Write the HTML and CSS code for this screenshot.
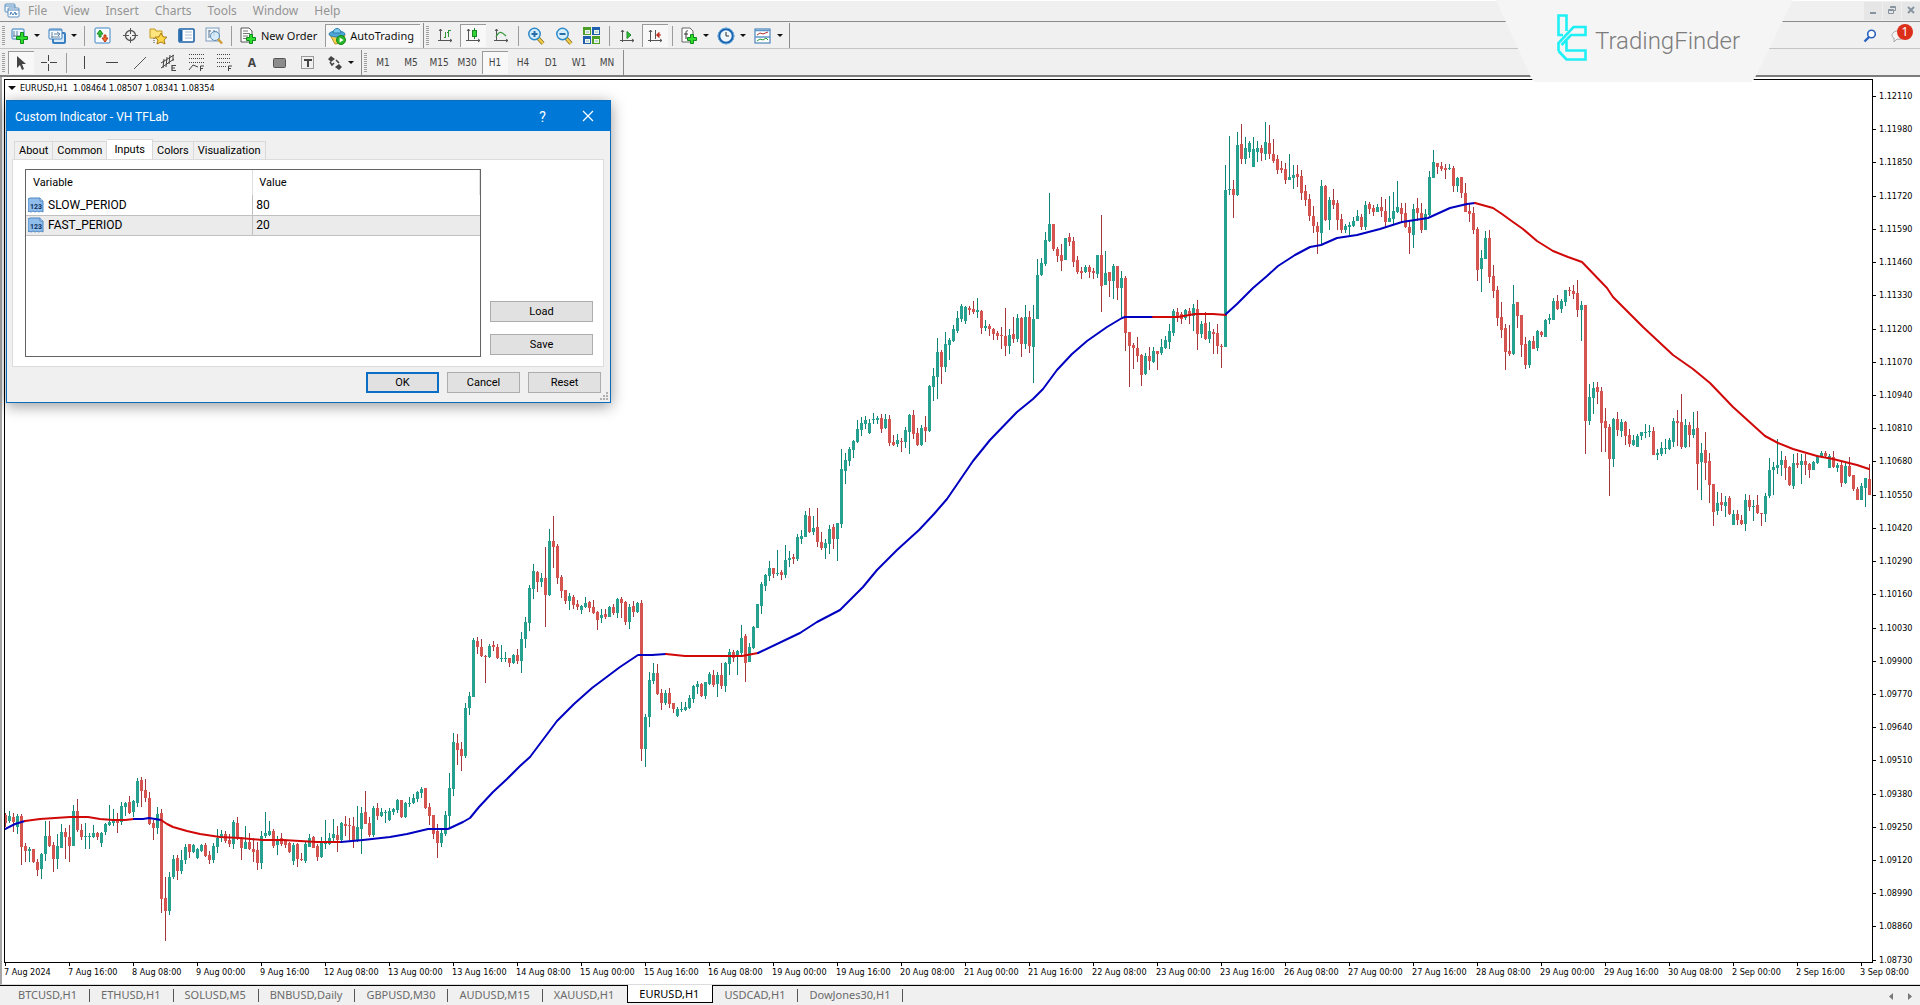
FILE: index.html
```
<!DOCTYPE html>
<html lang="en">
<head>
  <meta charset="UTF-8">
  <meta name="viewport" content="width=device-width, initial-scale=1.0">
  <title>EURUSD,H1</title>
  <link rel="stylesheet" href="styles.css">
</head>
<body>
  <header class="menubar">
    <svg class="app_icon" width="16" height="16" viewBox="0 0 16 16"><rect x="1" y="1" width="10" height="8" rx="1" fill="#eef6fc" stroke="#5a8fc0"/><path d="M1 3h10" stroke="#5a8fc0"/><rect x="4" y="5" width="11" height="9" rx="1" fill="#fff" stroke="#5a8fc0"/><path d="M4 7h11M6 12l1-3 2 3 2-3 1 3 1-2" fill="none" stroke="#4c82b8"/></svg>
    <nav class="menu">
      <a href="#">File</a><a href="#">View</a><a href="#">Insert</a><a href="#">Charts</a><a href="#">Tools</a><a href="#">Window</a><a href="#">Help</a>
    </nav>
    <div class="win_btns">
      <button aria-label="Minimize"><svg width="10" height="10"><path d="M2 8h6" stroke="#8794a0" stroke-width="2"/></svg></button>
      <button aria-label="Restore"><svg width="10" height="10" fill="none" stroke="#8794a0"><path d="M3.500 3V1.500h5v4H7M3 2.500h6M1.500 4.500h5v4h-5zM1 5.500h6"/></svg></button>
      <button aria-label="Close"><svg width="10" height="10"><path d="M2 2l6 6M8 2l-6 6" stroke="#8794a0" stroke-width="2"/></svg></button>
    </div>
  </header>

  <div class="toolbars">
    <div class="toolbar">
      <i class="grip"></i>
      <button class="tool drop" aria-label="New chart"><svg width="18" height="18" viewBox="0 0 18 18"><rect x="1" y="2" width="12" height="10" rx="1" fill="#eaf5fd" stroke="#2f7dbd"/><path d="M3 4v6M2 9h7M6 4v5" stroke="#5c7f9c" fill="none"/><path d="M9.500 5.500h3v4h4v3h-4v4h-3v-4h-4v-3h4z" fill="#2fdc2f" stroke="#0d8a17"/></svg><i class="caret"></i></button>
      <button class="tool drop" aria-label="Profiles"><svg width="18" height="18" viewBox="0 0 18 18"><rect x="5" y="6" width="12" height="10" rx="1" fill="#d8e9f7" stroke="#3a7fc0" stroke-width="2"/><rect x="1" y="2" width="13" height="10" rx="1" fill="#f2f9ff" stroke="#3a7fc0"/><path d="M1 3h13" stroke="#3a7fc0"/><path d="M4 5v6M3 10h9M6 7h6M9 5l3 2-2 2" stroke="#6b87a0" fill="none"/></svg><i class="caret"></i></button>
      <i class="sep"></i>
      <button class="tool" aria-label="Market Watch"><svg width="17" height="17" viewBox="0 0 17 17"><rect x="1" y="1" width="15" height="15" rx="1" fill="#f6fbff" stroke="#3c84c4"/><path d="M3 7l3-4 3 4H7v3H5V7z" fill="#38c43a" stroke="#178a22"/><path d="M8 11l3 4 3-4h-2V8h-2v3z" fill="#f06a2c" stroke="#c03a12"/></svg></button>
      <button class="tool" aria-label="Data Window"><svg width="17" height="17" viewBox="0 0 17 17" fill="none" stroke="#555"><circle cx="8.500" cy="8.500" r="5" stroke-width="1.300"/><path d="M8.500 1v6M8.500 10v6M1 8.500h6M10 8.500h6"/></svg></button>
      <button class="tool" aria-label="Navigator"><svg width="18" height="18" viewBox="0 0 18 18"><path d="M1 2h5l1 2h6v7H1z" fill="#ffe480" stroke="#c29a1f"/><path d="M5 11v5" stroke="#444" stroke-dasharray="1 1"/><path d="M12 6l2 3.800 4 .4-3 2.800 1 4-4-2-4 2 1-4-3-2.800 4-.4z" fill="#ffd84a" stroke="#a87c12"/></svg></button>
      <button class="tool" aria-label="Terminal"><svg width="17" height="17" viewBox="0 0 17 17"><rect x="1" y="2" width="15" height="13" rx="1" fill="#fff" stroke="#1d63a8" stroke-width="1.600"/><path d="M3 3v11" stroke="#1d63a8" stroke-width="3"/><path d="M7 5h7M7 8h7M7 11h7" stroke="#a9bccd"/></svg></button>
      <button class="tool" aria-label="Strategy Tester"><svg width="18" height="18" viewBox="0 0 18 18"><rect x="1" y="1" width="13" height="13" fill="#f2f7fb" stroke="#7f9dba"/><path d="M4 3v8M4 4h2M9 3v6M9 5h3" stroke="#56708a" fill="none"/><circle cx="10" cy="9" r="4.500" fill="#cfe7f7" fill-opacity=".8" stroke="#5c8db8"/><path d="M13 12l4 4.500" stroke="#d19c33" stroke-width="2.400"/></svg></button>
      <i class="sep"></i>
      <button class="tool wide"><svg width="18" height="18" viewBox="0 0 18 18"><path d="M2 1h8l3 3v11H2z" fill="#fff" stroke="#555"/><path d="M4 4h5M4 6.500h7M4 9h5M4 11.500h3" stroke="#777"/><path d="M10.500 7.500h3v3h3v3h-3v3h-3v-3h-3v-3h3z" fill="#2fdc2f" stroke="#0d8a17"/></svg>New Order</button>
      <button class="tool wide on"><svg width="18" height="18" viewBox="0 0 18 18"><path d="M2 8l5 9 7-1 3-8z" fill="#f5d24c" stroke="#b8922a"/><ellipse cx="9" cy="7" rx="8" ry="3" fill="#4ea7d8" stroke="#2c7fb0"/><path d="M5 6c0-6 8-6 8 0z" fill="#7cc8ee" stroke="#2c7fb0"/><circle cx="13" cy="13" r="4.500" fill="#2ab52a" stroke="#128a1a"/><path d="M11.600 10.500v5l4-2.500z" fill="#fff"/></svg>AutoTrading</button>
      <i class="edge"></i>
      <i class="grip"></i>
      <button class="tool" aria-label="Bar Chart"><svg width="16" height="16" viewBox="0 0 16 16" fill="none"><path d="M3.500 1v12M1 12.500h14M2 3l1.500-2L5 3M13 11l2 1.500L13 14" stroke="#555"/><path d="M8.500 4v6M7 9.500h1M11.500 2v7M10 4.500h1M12 2.500h2" stroke="#2b9a36"/></svg></button>
      <button class="tool on" aria-label="Candlesticks"><svg width="16" height="16" viewBox="0 0 16 16" fill="none"><path d="M3.500 1v12M1 12.500h14M2 3l1.500-2L5 3M13 11l2 1.500L13 14" stroke="#555"/><path d="M9.500 0v11" stroke="#178a22"/><rect x="7.500" y="2.500" width="4" height="6" fill="#35d23c" stroke="#178a22"/></svg></button>
      <button class="tool" aria-label="Line Chart"><svg width="16" height="16" viewBox="0 0 16 16" fill="none"><path d="M3.500 1v12M1 12.500h14M2 3l1.500-2L5 3M13 11l2 1.500L13 14" stroke="#555"/><path d="M3 9c3-6 5-6 10-1" stroke="#3a9a42" stroke-width="1.300"/></svg></button>
      <i class="sep"></i>
      <button class="tool" aria-label="Zoom In"><svg width="18" height="18" viewBox="0 0 18 18"><path d="M11 11l5 5.500" stroke="#8a6a1c" stroke-width="4"/><path d="M11 11l5 5.500" stroke="#f0cf4a" stroke-width="2.400"/><circle cx="7.500" cy="7" r="5.700" fill="#d6effd" stroke="#2f8ac8" stroke-width="1.500"/><path d="M4.500 7h6M7.500 4v6" stroke="#2a6ea8" stroke-width="2"/></svg></button>
      <button class="tool" aria-label="Zoom Out"><svg width="18" height="18" viewBox="0 0 18 18"><path d="M11 11l5 5.500" stroke="#8a6a1c" stroke-width="4"/><path d="M11 11l5 5.500" stroke="#f0cf4a" stroke-width="2.400"/><circle cx="7.500" cy="7" r="5.700" fill="#d6effd" stroke="#2f8ac8" stroke-width="1.500"/><path d="M4.500 7h6" stroke="#2a6ea8" stroke-width="2"/></svg></button>
      <button class="tool" aria-label="Tile Windows"><svg width="17" height="17" viewBox="0 0 17 17"><path d="M0 0h8v8H0zM9 9h8v8H9z" fill="#4d9e26"/><path d="M9 0h8v8H9zM0 9h8v8H0z" fill="#1f5fae"/><path d="M2 3h5v4H2zM11 3h5v4h-5zM2 12h5v4H2zM11 12h5v4h-5z" fill="#eef7ea"/><path d="M3 5h3M12 5h3M3 14h3M12 14h3" stroke="#8fb6c8"/></svg></button>
      <i class="sep"></i>
      <button class="tool" aria-label="Auto Scroll"><svg width="16" height="16" viewBox="0 0 16 16" fill="none"><path d="M3.500 2v12M1 12.500h14M2 4l1.500-2L5 4M13 11l2 1.500L13 14" stroke="#555"/><path d="M8 3.500v7l4-3.500z" fill="#35c23c" stroke="#178a22"/></svg></button>
      <button class="tool on" aria-label="Chart Shift"><svg width="16" height="16" viewBox="0 0 16 16" fill="none"><path d="M3.500 2v12M1 12.500h14M2 4l1.500-2L5 4M13 11l2 1.500L13 14M8.500 2v9" stroke="#555"/><path d="M14 7H10M12 4.500L9.500 7 12 9.500z" stroke="#c22a1c" fill="#c22a1c"/></svg></button>
      <i class="sep"></i>
      <button class="tool drop" aria-label="Indicators"><svg width="18" height="18" viewBox="0 0 18 18"><path d="M2 1h8l3 3v11H2z" fill="#fff" stroke="#666"/><path d="M8 4c-2-1-2 1-2 3v5M4 7h4" stroke="#333" fill="none"/><path d="M10.500 7.500h3v3h3v3h-3v3h-3v-3h-3v-3h3z" fill="#2fdc2f" stroke="#0d8a17"/></svg><i class="caret"></i></button>
      <button class="tool drop" aria-label="Periods"><svg width="18" height="18" viewBox="0 0 18 18"><circle cx="9" cy="9" r="7" fill="#eef7fd" stroke="#1d62ac" stroke-width="2.600"/><circle cx="9" cy="9" r="8" fill="none" stroke="#6fb2e4"/><path d="M9 5v4h3" stroke="#333" fill="none"/></svg><i class="caret"></i></button>
      <button class="tool drop" aria-label="Templates"><svg width="18" height="18" viewBox="0 0 18 18"><rect x="1" y="2" width="15" height="14" fill="#fff" stroke="#2d6fae"/><path d="M1 3.500h15M1 10h15" stroke="#5d98cb" stroke-width="1.500"/><path d="M3 8l3-2 3 1 5-2" stroke="#a33" fill="none"/><path d="M3 14l3-2 3 1 3-2 2 2" stroke="#2b9a36" fill="none"/></svg><i class="caret"></i></button>
      <i class="edge"></i>
      <div class="status">
        <button class="tool" aria-label="Search"><svg width="14" height="14" viewBox="0 0 14 14"><circle cx="8.500" cy="5" r="3.800" fill="#fff" stroke="#2a62c0" stroke-width="1.600"/><path d="M6 8l-4.500 4.500" stroke="#2a62c0" stroke-width="2.400"/></svg></button>
        <button class="tool chat" aria-label="Messages"><svg width="16" height="14" viewBox="0 0 16 14"><path d="M3 4c3-4 11-2 11 2s-5 5-7 4l-3 3v-4C1 8 2 5 3 4z" fill="#f4f4f4" stroke="#a8a8a8"/></svg><b class="badge">1</b></button>
      </div>
    </div>

    <div class="toolbar second">
      <i class="grip"></i>
      <button class="tool on" aria-label="Cursor"><svg width="14" height="16" viewBox="0 0 14 16"><path d="M3 1v12l3-3 2 5 2-1-2-5h4z" fill="#444"/></svg></button>
      <button class="tool" aria-label="Crosshair"><svg width="16" height="16" viewBox="0 0 16 16" stroke="#444"><path d="M7.500 0v6M7.500 9v7M0 7.500h6M9 7.500h7"/></svg></button>
      <i class="sep"></i>
      <button class="tool" aria-label="Vertical Line"><svg width="16" height="16" stroke="#444"><path d="M8.500 1v13"/></svg></button>
      <button class="tool" aria-label="Horizontal Line"><svg width="16" height="16" stroke="#444"><path d="M2 7.500h12"/></svg></button>
      <button class="tool" aria-label="Trendline"><svg width="16" height="16" stroke="#555"><path d="M2 14L14 2"/></svg></button>
      <button class="tool" aria-label="Equidistant Channel"><svg width="17" height="17" viewBox="0 0 17 17" stroke="#444" fill="none"><path d="M1 9L14 1M1 14L14 5M4 5l-1 9M7 3L6 13M10 1L9 10M13 1v6"/><path d="M16 11.500h-4v5h4M12 14h3" stroke-width="1.200"/></svg></button>
      <button class="tool" aria-label="Fibonacci"><svg width="17" height="17" viewBox="0 0 17 17" stroke="#444" fill="none"><path d="M1 .500h15M1 4.500h15M1 8.500h15" stroke-dasharray="1 1"/><path d="M1 16l4-5 5 2"/><path d="M12.500 17v-5H16M12 14.500h3"/></svg></button>
      <button class="tool" aria-label="Fibonacci Retracement"><svg width="17" height="17" viewBox="0 0 17 17" stroke="#444" fill="none"><path d="M1 .500h14M1 4.500h14M1 8.500h14M1 12.500h9" stroke-dasharray="1 1"/><path d="M12.500 17v-5H16M12 14.500h3"/></svg></button>
      <button class="tool letter">A</button>
      <button class="tool" aria-label="Rectangle"><svg width="16" height="16"><rect x="1.500" y="3.500" width="12" height="9" rx="1" fill="#8c8c8c" stroke="#555"/></svg></button>
      <button class="tool" aria-label="Text Label"><svg width="14" height="14" fill="none"><rect x=".5" y=".5" width="12" height="12" stroke="#444" stroke-dasharray="1 1"/><path d="M3 4h8M7 4v7" stroke="#444" stroke-width="2"/></svg></button>
      <button class="tool drop" aria-label="Arrows"><svg width="16" height="16" viewBox="0 0 16 16" fill="#444"><path d="M1 4l3-3 4 3-4 3zM8 12l4-3 3 3-3 3z"/><path d="M3 7l2 3 2-2M9 5l3 3" stroke="#444" fill="none" stroke-width="1.500"/></svg><i class="caret"></i></button>
      <i class="edge"></i>
      <i class="grip"></i>
      <button class="tool tf">M1</button>
      <button class="tool tf">M5</button>
      <button class="tool tf">M15</button>
      <button class="tool tf">M30</button>
      <button class="tool tf on">H1</button>
      <button class="tool tf">H4</button>
      <button class="tool tf">D1</button>
      <button class="tool tf">W1</button>
      <button class="tool tf">MN</button>
      <i class="edge"></i>
    </div>
  </div>

  <div class="brand">
    <svg width="30" height="47" viewBox="0 0 30 47" fill="none" stroke="#1ef0f5" stroke-width="2.600"><path d="M9.500 17V1.500h-8V21H6M1.500 37v-8L16.500 13h12v8H14L4.500 31M9.500 27v9.500h19v9H9.500l-8-8.500"/></svg>
    <span>TradingFinder</span>
  </div>

  <main class="chart">
    <div class="plot">
      <svg class="candles" id="candles"></svg>
      <p class="caption"><i class="caret"></i>EURUSD,H1&nbsp; 1.08464 1.08507 1.08341 1.08354</p>

      <section class="dialog" role="dialog" aria-labelledby="dlg_title">
        <div class="dlg_head">
          <h1 id="dlg_title">Custom Indicator - VH TFLab</h1>
          <button aria-label="Help">?</button>
          <button aria-label="Close"><svg width="12" height="12"><path d="M1 1l10 10M11 1L1 11" stroke="#fff" stroke-width="1.200"/></svg></button>
        </div>
        <div class="dlg_tabs">
          <button>About</button><button>Common</button><button class="active">Inputs</button><button>Colors</button><button>Visualization</button>
        </div>
        <div class="dlg_panel">
          <div class="grid_box">
            <table>
              <thead><tr><th>Variable</th><th>Value</th></tr></thead>
              <tbody>
                <tr>
                  <td><span class="var"><svg width="16" height="16" viewBox="0 0 16 16"><path d="M2 1h10l3 3v11l-2-1-2 1-2-1-2 1-2-1-2 1-2-1-1 1V2z" fill="#8fbdec" stroke="#4f86c0"/><path d="M12 1v3h3" fill="#d8eafb" stroke="#4f86c0"/><text x="2" y="12" font-size="7" font-weight="bold" fill="#10305c">123</text></svg>SLOW_PERIOD</span></td>
                  <td>80</td>
                </tr>
                <tr class="sel">
                  <td><span class="var"><svg width="16" height="16" viewBox="0 0 16 16"><path d="M2 1h10l3 3v11l-2-1-2 1-2-1-2 1-2-1-2 1-2-1-1 1V2z" fill="#8fbdec" stroke="#4f86c0"/><path d="M12 1v3h3" fill="#d8eafb" stroke="#4f86c0"/><text x="2" y="12" font-size="7" font-weight="bold" fill="#10305c">123</text></svg>FAST_PERIOD</span></td>
                  <td>20</td>
                </tr>
              </tbody>
            </table>
          </div>
          <div class="side">
            <button class="btn">Load</button>
            <button class="btn">Save</button>
          </div>
        </div>
        <div class="dlg_foot">
          <button class="btn default">OK</button>
          <button class="btn">Cancel</button>
          <button class="btn">Reset</button>
        </div>
        <svg class="resize" width="8" height="8" fill="#b0b0b0"><path d="M6 0h2v2H6zM3 3h2v2H3zM6 3h2v2H6zM0 6h2v2H0zM3 6h2v2H3zM6 6h2v2H6z"/></svg>
      </section>
    </div>
    <ol class="prices" id="prices"></ol>
    <ol class="times" id="times"></ol>
  </main>

  <footer class="tabs">
    <a href="#">BTCUSD,H1</a>
    <a href="#">ETHUSD,H1</a>
    <a href="#">SOLUSD,M5</a>
    <a href="#">BNBUSD,Daily</a>
    <a href="#">GBPUSD,M30</a>
    <a href="#">AUDUSD,M15</a>
    <a href="#" class="last">XAUUSD,H1</a>
    <a href="#" class="active">EURUSD,H1</a>
    <a href="#">USDCAD,H1</a>
    <a href="#">DowJones30,H1</a>
    <div class="scroll">
      <button aria-label="Scroll left"><svg width="4" height="7"><path d="M4 0v7L0 3.500z" fill="#777"/></svg></button>
      <button aria-label="Scroll right"><svg width="4" height="7"><path d="M0 0v7l4-3.500z" fill="#777"/></svg></button>
    </div>
  </footer>
  <script src="chart.js"></script>
</body>
</html>
```

FILE: styles.css
```
*, *:before, *:after {
  box-sizing: border-box;
  margin: 0;
  padding: 0;
}
html, body {
  height: 100%;
}
body {
  display: flex;
  flex-direction: column;
  overflow: hidden;
  position: relative;
  background: #f0f0f0;
  font: 12px/16px "Noto Sans", "Open Sans", sans-serif;
  color: #111;
}
button {
  border: 0;
  background: none;
  font: inherit;
  color: inherit;
}
a {
  color: inherit;
  text-decoration: none;
}
ol {
  list-style: none;
}
svg {
  flex: none;
}

/* menu */
.menubar {
  display: flex;
  align-items: center;
  height: 22px;
  padding-left: 4px;
  border-top: 1px solid #fff;
  border-bottom: 1px solid #8c8c8c;
  color: #949494;
}
.menu {
  display: flex;
  flex: 1;
  gap: 16px;
  padding-left: 8px;
}
.win_btns {
  display: flex;
  gap: 1px;
}
.win_btns button {
  width: 18px;
  height: 18px;
  background: #e6e6e6;
}

/* toolbars */
.toolbar {
  display: flex;
  align-items: center;
  height: 27px;
  padding: 1px 0 0 2px;
  border-bottom: 1px solid #c4c4c4;
}
.toolbar.second {
  height: 28px;
  border-bottom: 2px solid #7c7c7c;
}
.grip {
  width: 3px;
  height: 20px;
  margin-right: 2px;
  background: repeating-linear-gradient(#a0a0a0 0 1px, transparent 1px 2px);
}
.sep {
  width: 1px;
  height: 20px;
  margin: 0 3px;
  background: #9c9c9c;
}
.edge {
  width: 1px;
  height: 25px;
  margin: 0 2px;
  background: #8c8c8c;
}
.tool {
  display: flex;
  align-items: center;
  justify-content: center;
  width: 26px;
  height: 23px;
  margin: 0 1px;
}
.tool.on {
  background: #f8f8f8;
  box-shadow: inset 1px 1px #9a9a9a;
}
.tool.drop {
  width: 35px;
  gap: 5px;
}
.tool.wide {
  width: auto;
  gap: 4px;
  padding: 0 6px 0 3px;
  font-size: 11px;
}
.tool.tf {
  color: #444;
  font: 10px/14px "DejaVu Sans Condensed", "DejaVu Sans", sans-serif;
}
.tool.letter {
  color: #444;
  font: bold 12px/16px "Noto Sans", sans-serif;
}
.caret {
  border: 3px solid transparent;
  border-top: 3px solid #111;
  border-bottom: 0;
}
.status {
  display: flex;
  margin-left: auto;
  padding-right: 8px;
}
.chat {
  position: relative;
}
.badge {
  position: absolute;
  top: 0;
  right: -2px;
  width: 16px;
  height: 16px;
  border-radius: 50%;
  background: #dc2f1a;
  color: #fff;
  font-weight: normal;
}
.brand {
  position: absolute;
  top: 0;
  right: 127px;
  z-index: 2;
  display: flex;
  align-items: center;
  gap: 8px;
  width: 297px;
  height: 82px;
  padding: 0 0 8px 61px;
  background: #f5f5f5;
  clip-path: polygon(0 0, 100% 0, 87% 96%, 86% 100%, 13% 100%, 12% 96%);
  color: #7c7c7c;
  font: 300 24px/28px Roboto, sans-serif;
}
.brand span {
  padding-top: 8px;
}

/* chart window */
.chart {
  flex: 1;
  display: grid;
  grid-template: minmax(0, 1fr) 21px / minmax(0, 1fr) 45px;
  min-height: 0;
  padding: 2px 2px 0 2px;
  border-left: 2px solid #a6a6a6;
  border-bottom: 1px solid #dcdcdc;
  background: #fff;
  font: 9px/12px "DejaVu Sans Condensed", "DejaVu Sans", sans-serif;
  color: #000;
}
.plot {
  position: relative;
  border: 1px solid #000;
}
.candles {
  display: block;
  width: 100%;
  height: 100%;
}
.caption {
  position: absolute;
  top: 2px;
  left: 3px;
  display: flex;
  align-items: center;
  gap: 4px;
}
.caption .caret {
  border-width: 4px 4px 0;
}
.prices {
  display: flex;
  flex-direction: column;
  justify-content: space-between;
  padding-top: 11px;
  margin-bottom: -3px;
}
.prices li {
  padding-left: 6px;
  background: linear-gradient(#000, #000) 0 6px / 3px 1px no-repeat;
}
.times {
  grid-column: 1 / 3;
  display: flex;
  overflow: hidden;
}
.times li {
  flex: none;
  width: 64px;
  padding-top: 3px;
  white-space: nowrap;
  background: linear-gradient(#000, #000) 1px 0 / 1px 3px no-repeat;
}

/* indicator dialog */
.dialog {
  position: absolute;
  top: 20px;
  left: 1px;
  width: 605px;
  border: 1px solid #0a6cbd;
  background: #f0f0f0;
  box-shadow: 0 3px 14px rgba(0, 0, 0, 0.4);
  font: 12px/16px Roboto, sans-serif;
}
.dlg_head {
  display: flex;
  align-items: center;
  height: 30px;
  padding: 2px 0 0 8px;
  background: #0078d7;
  color: #fff;
}
.dlg_head h1 {
  flex: 1;
  font-size: 12px;
  font-weight: normal;
}
.dlg_head button {
  width: 45px;
  font-size: 14px;
}
.dlg_tabs {
  display: flex;
  align-items: flex-end;
  height: 28px;
  padding-left: 7px;
  font-size: 11px;
}
.dlg_tabs button {
  height: 18px;
  padding: 0 4px;
  border: 1px solid #d9d9d9;
  border-bottom: 0;
  border-left-width: 0;
}
.dlg_tabs button:first-child {
  border-left-width: 1px;
}
.dlg_tabs .active {
  height: 20px;
  padding: 0 7px;
  background: #fff;
}
.dlg_panel {
  display: flex;
  gap: 9px;
  height: 208px;
  margin: 0 6px 0 5px;
  padding: 9px 10px 9px 12px;
  border: 1px solid #dcdcdc;
  background: #fff;
}
.grid_box {
  flex: 1;
  border: 1px solid #646464;
}
.grid_box table {
  width: 100%;
  border-collapse: collapse;
  table-layout: fixed;
}
.grid_box th {
  height: 25px;
  padding-left: 7px;
  text-align: left;
  font-size: 11px;
  font-weight: normal;
}
.grid_box th + th {
  border-left: 1px solid #e0e0e0;
  border-right: 1px solid #e0e0e0;
  padding-left: 6px;
}
.grid_box td {
  height: 20px;
  padding-left: 2px;
  border-bottom: 1px solid #c0c0c0;
}
.grid_box td + td {
  border-left: 1px solid #c0c0c0;
  padding-left: 3px;
}
.sel {
  background: #ebebeb;
}
.var {
  display: flex;
  align-items: center;
  gap: 4px;
}
.side {
  display: flex;
  flex-direction: column;
  justify-content: flex-end;
  gap: 12px;
  padding-bottom: 2px;
}
.btn {
  width: 73px;
  height: 21px;
  border: 1px solid #adadad;
  background: #e1e1e1;
  font-size: 11px;
}
.side .btn {
  width: 103px;
}
.btn.default {
  border: 2px solid #0a6fc4;
}
.dlg_foot {
  display: flex;
  justify-content: flex-end;
  gap: 8px;
  padding: 5px 9px 9px;
}
.resize {
  position: absolute;
  right: 2px;
  bottom: 2px;
}

/* chart tabs */
.tabs {
  display: flex;
  height: 20px;
  padding-left: 7px;
  border-top: 1px solid #000;
  color: #6a6a6a;
  font-size: 11px;
  line-height: 18px;
}
.tabs a {
  padding: 0 13px 0 11px;
  background: linear-gradient(#555, #555) 100% 3px / 1px 13px no-repeat;
}
.tabs .last {
  background: none;
}
.tabs .active {
  height: 18px;
  margin-top: -1px;
  border: solid #000;
  border-width: 0 1px 1px;
  background: #fff;
  color: #000;
}
.scroll {
  display: flex;
  gap: 15px;
  margin-left: auto;
  padding-right: 8px;
}
```

FILE: chart.js
```
const STEP = 4;          // one bar every 4px
const ORIGIN = { x: 5, y: 80 };

// each bar: colour, high, body top, body bottom, low (3 units per pixel, counted from top)
const series = [
  { top: 700, bars: `
r 338 345 370 380,g 333 347 363 368,r 340 350 365 395,g 342 347 380 402,r 342 348 440 495,r 428 438 452 487,g 440 448 453 487,r 447 447 487 490,
r 477 485 510 528,g 458 462 507 537,g 363 407 462 483,r 363 408 437 440,r 425 435 477 515,g 402 437 478 507,g 372 395 443 445,r 385 397 412 477,
r 375 410 437 486,g 315 333 437 438,r 297 333 390 395,r 373 390 411 420,g 370 407 410 446,g 398 408 412 446,g 375 400 410 415,r 395 398 412 420,
g 395 400 430 440,g 370 373 397 405,g 315 366 374 377,g 327 364 368 377,r 340 358 368 398,g 305 318 367 375,g 305 308 322 348,r 288 307 340 343,
g 300 304 336 350,g 234 243 308 322,r 232 241 272 320,r 238 270 293 305,r 277 294 371 376,r 360 369 383 420,g 322 341 385 402,r 327 338 597 640,
r 530 594 632 722,g 517 530 632 644,g 465 477 531 537,r 465 474 512 540,g 450 480 513 522,g 433 441 480 493,r 433 433 455 475,g 431 436 455 458,
g 443 447 473 477,g 431 435 453 456,r 430 435 467 470,r 453 465 480 492,g 430 438 479 489,g 388 413 441 459,g 390 402 415 425,r 393 402 422 428,
r 403 420 431 440,g 360 367 432 446,r 352 368 410 420,r 412 415 445 480,g 378 427 446 447,r 398 427 446 451,r 415 446 457 487,r 427 450 489 510,
g 393 407 489 507,g 336 398 407 413,g 363 393 405 407,r 388 393 438 443,g 408 418 434 465,r 400 415 433 437,r 417 421 436 443,r 425 430 457 460,
g 430 434 482 495,r 430 433 478 500,r 460 477 480 483,g 425 433 482 490,g 402 415 440 442,r 408 412 444 445,r 433 438 472 482,g 410 430 471 473,
g 360 425 433 448,g 400 415 432 435,g 358 403 415 430,r 377 405 420 456,g 365 368 420 428,r 348 372 378 407,r 355 375 378 427,r 350 378 424 444,
g 318 381 424 426,g 322 338 388 462,r 273 337 371 373,r 352 369 405 410,g 318 323 405 410,r 310 324 347 360,g 323 337 347 351,g 330 336 340 370,
g 325 333 361 363,g 325 327 336 345,g 297 299 330 340,r 299 300 350 353,g 305 310 351 353,g 290 308 310 320,g 283 293 308 311,g 272 276 297 305,
g 261 267 278 293,r 264 264 323 328,r 310 320 348 376,r 345 346 402 418,r 372 393 428 473,g 388 398 429 440,g 332 345 403 407,g 220 265 347 387,
g 98 126 266 288,r 102 128 150 195,r 126 147 168 213` },
  { top: 480, bars: `
g 670 683 828 833,g 637 648 684 705,g 474 480 650 650,r 471 483 502 522,r 477 501 527 530,r 525 527 530 608,g 492 498 531 534,r 483 495 502 513,
r 492 501 534 537,g 495 533 536 545,g 516 533 537 545,r 533 534 548 560,g 521 524 548 551,r 508 525 543 551,g 457 477 542 578,g 412 426 477 503,
g 315 324 428 452,g 253 273 326 356,r 273 275 305 335,g 280 294 305 320,r 201 294 345 440,g 147 183 345 347,r 108 183 201 264,r 192 198 293 311,
r 285 291 332 353,r 330 331 362 371,g 339 347 364 389,r 345 350 374 387,r 360 372 381 390,g 375 378 389 402,g 351 369 380 384,r 363 367 383 397,
r 360 381 398 402,r 393 396 420 449,g 387 404 414 428,r 387 402 411 416,g 378 380 410 411,r 372 381 398 404,g 353 356 398 413,r 351 356 368 413,
r 363 367 426 434,g 372 381 426 446,r 363 378 395 410,g 366 369 395 398,r 360 369 806 843,g 702 711 806 861,g 576 600 711 740,g 549 579 602 612,
r 552 579 641 644,r 627 639 668 690,g 630 639 668 674,r 624 639 671 683,r 669 670 686 699,g 681 687 707 710,g 665 686 690 696,g 665 681 690 693,
g 645 654 684 687,g 615 618 656 669,g 603 612 620 642,r 609 612 647 651,g 606 606 647 656,g 576 582 611 614,r 570 585 614 620,g 576 585 611 651,
r 549 585 617 627,g 546 549 618 635,g 507 516 551 584,r 510 516 533 545,g 510 513 530 584,g 435 474 518 530,r 462 468 548 605,g 489 501 545 546,
g 438 441 503 506,g 372 373 443 444,g 306 312 377 402,g 282 285 317 332,g 243 264 287 303,r 264 265 281 294,g 210 279 282 287,r 270 276 285 300,
g 195 240 285 294,g 213 234 240 260,r 221 231 237 252,g 162 171 237 243,g 150 168 177 192,g 93 105 170 171,r 84 107 155 159,g 108 144 155 165,
r 84 141 186 201,r 156 186 204 209,g 177 189 204 237,g 135 147 191 222,r 132 141 177 207,g 129 130 176 243` },
  { top: 180, bars: `
g 807 867 1031 1043,g 819 840 873 911,g 801 807 843 858,g 780 783 810 834,g 720 747 786 789,g 711 729 750 767,g 708 720 731 747,g 717 730 759 762,
g 699 716 719 732,g 708 713 719 732,r 702 714 746 759,g 702 717 744 747,r 705 717 788 797,r 765 786 795 797,g 762 780 792 801,r 774 783 787 815,
g 741 750 786 803,g 702 705 755 822,r 690 705 762 776,r 744 759 794 797,g 735 743 795 797,r 708 741 752 786,g 615 618 753 755,g 564 588 620 662,
g 474 516 591 656,r 510 516 561 611,g 456 492 561 575,g 474 480 494 540,g 435 447 482 485,g 393 414 453 458,g 372 378 417 426,g 378 381 422 431,
r 378 384 390 404,r 363 387 396 402,g 354 390 396 414,r 390 393 443 461,g 420 438 443 453,r 432 437 447 467,r 444 447 461 479,r 453 459 467 479,
r 441 465 469 506,r 384 468 497 527,g 447 465 497 522,r 411 462 476 489,g 402 414 477 486,r 411 414 492 531,g 375 411 492 507,r 393 411 497 519,
g 375 417 500 608,g 237 285 417 418,g 234 249 285 288,g 156 180 252 258,g 39 132 183 186,r 132 132 207 212,r 201 207 227 246,r 192 225 243 272,
g 174 174 240 240,r 159 171 186 198,r 171 183 246 261,r 228 240 276 281,r 261 273 279 296,g 255 261 275 279,r 255 261 276 293,r 264 273 279 296,
g 225 225 282 293,r 105 225 317 396,g 213 279 315 316,r 276 276 302 350,g 252 258 302 356,r 258 258 323 359,g 273 294 323 410,r 288 294 458 513,
r 456 456 497 621,r 489 494 504 567,r 471 504 527 545,r 522 525 584 618,g 519 528 582 584,r 501 528 542 569,g 501 513 545 548,r 513 513 521 570,
g 477 501 518 524,g 468 480 503 506,g 432 453 486 506,g 387 393 458 467,r 384 396 413 425,r 396 402 417 431,g 387 390 415 420,r 384 393 408 431,
g 372 384 407 453,r 360 387 461 510,g 423 432 461 474,r 396 429 477 480,g 426 453 476 489,r 447 456 461 522,r 432 459 497 522,r 491 497 500 563` },
  { top: 100, bars: `
g 195 270 740 741,g 108 267 271 285,r 240 267 285 353,g 96 135 285 288,r 72 132 177 192,g 111 144 177 192,g 123 129 155 174,g 111 147 200 201,
g 123 144 155 186,r 135 144 158 183,g 66 126 161 180,r 75 129 162 177,r 117 162 182 189,r 165 177 209 221,r 183 204 210 218,r 189 207 240 252,
g 162 231 239 240,g 195 225 234 266,r 195 222 231 261,r 210 228 278 299,r 255 273 299 318,r 282 297 348 362,r 318 348 378 398,r 366 378 396 461,
g 240 258 398 432,r 255 258 360 362,g 291 300 360 390,r 267 300 314 326,r 300 309 360 390,r 342 357 390 399,g 372 378 390 399,g 366 375 380 405,
g 351 363 377 381,g 330 348 362 363,r 342 351 380 390,g 303 315 381 390,r 306 312 326 342,r 315 324 335 347,g 312 321 335 336,r 291 321 333 351,
r 297 333 366 380,g 288 354 365 366,g 276 333 357 374,g 243 321 336 339,r 309 324 342 365,r 309 339 380 383,r 360 381 398 461,g 312 327 404 443,
r 294 324 339 363,r 309 339 389 399,g 327 342 389 390,g 213 231 345 348,g 150 186 233 234,r 189 189 200 221,r 186 198 206 213,r 192 204 209 236,
g 192 204 207 210,r 198 204 258 276,g 231 234 258 276,r 231 231 280 293,r 249 279 335 336,r 309 333 341 366,r 321 339 389 402,r 381 387 510 542,
g 450 474 507 575,g 393 414 476 477,r 390 414 530 548,r 495 528 572 593,r 558 570 653 678,r 606 651 689 713,r 672 684 755 810,r 675 753 762 767,
g 555 612 762 764,r 606 606 648 684,r 645 645 735 770,r 711 732 795 806,g 720 723 795 803,r 708 723 746 747,g 690 693 743 752,r 693 696 705 710,
g 657 660 710 711,g 642 654 660 671,g 594 603 659 660,r 585 603 627 630` },
  { top: 220, bars: `
g 237 243 266 278,g 210 210 246 258,r 201 211 214 228,r 195 213 221 236,r 180 219 269 291,g 243 255 269 362,r 255 255 603 701,g 492 531 603 614,
g 486 504 534 582,r 486 501 515 551,r 501 513 608 696,r 564 603 623 696,r 612 621 716 827,g 594 597 716 741,r 576 597 630 648,g 597 606 632 650,
r 603 606 648 674,r 627 645 671 681,g 645 660 674 677,g 642 648 680 681,g 636 636 649 660,g 612 635 638 653,g 615 632 636 651,r 621 633 704 705,
g 687 699 705 720,g 666 684 702 708,g 657 684 687 701,g 654 660 687 690,g 594 603 666 680,r 570 603 608 677,r 522 606 680 686,g 597 615 680 683,
r 606 615 645 681,g 576 627 645 654,r 573 624 732 810,g 669 699 726 839,r 636 690 729 780,r 699 723 794 848,r 792 792 876 917,g 816 849 872 884,
r 819 846 855 872,g 828 846 857 891,r 828 834 881 884,g 870 882 914 915,r 870 882 899 914,r 885 900 911 914,g 822 840 912 933,r 825 840 860 872,
g 840 858 860 902,r 825 855 880 881,r 879 879 883 917,g 819 828 881 906,g 714 750 828 833,g 726 741 749 824,g 657 735 743 762,g 693 720 735 767,
r 708 720 743 780,r 738 741 795 797,g 702 729 797 806,r 699 729 734 744,g 702 723 734 792,r 702 723 734 765,r 729 732 749 774,g 723 726 749 750,
g 705 708 729 731,g 693 699 711 713,r 693 699 708 711,g 702 708 743 744,r 693 711 741 744,g 729 735 743 755,r 726 735 788 801,g 729 738 788 792,
r 711 738 767 770,r 765 765 807 812,r 801 807 839 840,g 789 798 839 840,g 774 774 803 861,r 732 777 824 825` }
];

const average = [
  ['up', '5,829 15,824 25,821'],
  ['down', '25,821 40,819 70,817 88,817 100,819 113,820 125,820 134,819'],
  ['up', '134,819 143,819 149,818 161,820'],
  ['down', '161,820 167,824 173,827 187,831 200,834 220,837 240,838 263,840 283,840 300,841 317,842 341,842'],
  ['up', '341,842 363,840 390,837 407,834 428,829 448,829 463,822 470,818 479,807 493,792 507,779 520,766 530,757 545,737 557,721 574,704 592,688 620,667 638,655 652,655 666,654'],
  ['down', '666,654 685,656 742,656 758,653'],
  ['up', '758,653 800,633 817,622 840,610 848,602 863,587 877,570 897,550 919,530 934,514 947,499 973,461 990,440 1017,412 1033,399 1043,389 1057,370 1072,354 1087,341 1107,327 1122,318 1125,317 1153,317'],
  ['down', '1153,317 1178,317 1195,314 1213,314 1226,315'],
  ['up', '1226,314 1237,304 1253,288 1267,276 1278,266 1295,255 1310,247 1321,245 1337,238 1357,235 1380,229 1402,222 1428,218 1450,208 1467,204 1475,203'],
  ['down', '1475,203 1493,208 1502,214 1513,222 1523,229 1537,241 1553,251 1568,257 1582,262 1607,288 1613,297 1643,327 1673,355 1693,369 1710,383 1733,407 1765,436 1778,443 1793,449 1817,456 1833,459 1857,465 1869,469']
];

const paint = {
  g: { wick: '#0f8577', body: '#26a08f' },
  r: { wick: '#a5383c', body: '#d65450' },
  up: '#0000c0',
  down: '#d00808'
};

let out = '<g transform="translate(' + -ORIGIN.x + ' ' + -ORIGIN.y + ')">';
let x = ORIGIN.x;
series.forEach(function (part) {
  part.bars.trim().split(/,\s*/).forEach(function (bar) {
    const f = bar.split(' ');
    const y = f.slice(1).map(v => Math.round(part.top + v / 3));
    const c = paint[f[0]];
    out += `<rect x="${x}" y="${y[0]}" width="1" height="${y[3] - y[0]}" fill="${c.wick}"/>`;
    out += `<rect x="${x - 1}" y="${y[1]}" width="3" height="${Math.max(1, y[2] - y[1])}" fill="${c.body}"/>`;
    x += STEP;
  });
});
average.forEach(function (line) {
  out += `<polyline points="${line[1]}" fill="none" stroke="${paint[line[0]]}" stroke-width="2" stroke-linejoin="round" stroke-linecap="round"/>`;
});
document.getElementById('candles').innerHTML = out + '</g>';

// price scale
let prices = '';
for (let p = 112110; p >= 108730; p -= 130) {
  prices += '<li>' + (p / 100000).toFixed(5) + '</li>';
}
document.getElementById('prices').innerHTML = prices;

// time scale
const times = ['7 Aug 2024', '7 Aug 16:00', '8 Aug 08:00', '9 Aug 00:00', '9 Aug 16:00', '12 Aug 08:00', '13 Aug 00:00', '13 Aug 16:00',
  '14 Aug 08:00', '15 Aug 00:00', '15 Aug 16:00', '16 Aug 08:00', '19 Aug 00:00', '19 Aug 16:00', '20 Aug 08:00', '21 Aug 00:00',
  '21 Aug 16:00', '22 Aug 08:00', '23 Aug 00:00', '23 Aug 16:00', '26 Aug 08:00', '27 Aug 00:00', '27 Aug 16:00', '28 Aug 08:00',
  '29 Aug 00:00', '29 Aug 16:00', '30 Aug 08:00', '2 Sep 00:00', '2 Sep 16:00', '3 Sep 08:00'];
document.getElementById('times').innerHTML = times.map(t => '<li>' + t + '</li>').join('');
```
